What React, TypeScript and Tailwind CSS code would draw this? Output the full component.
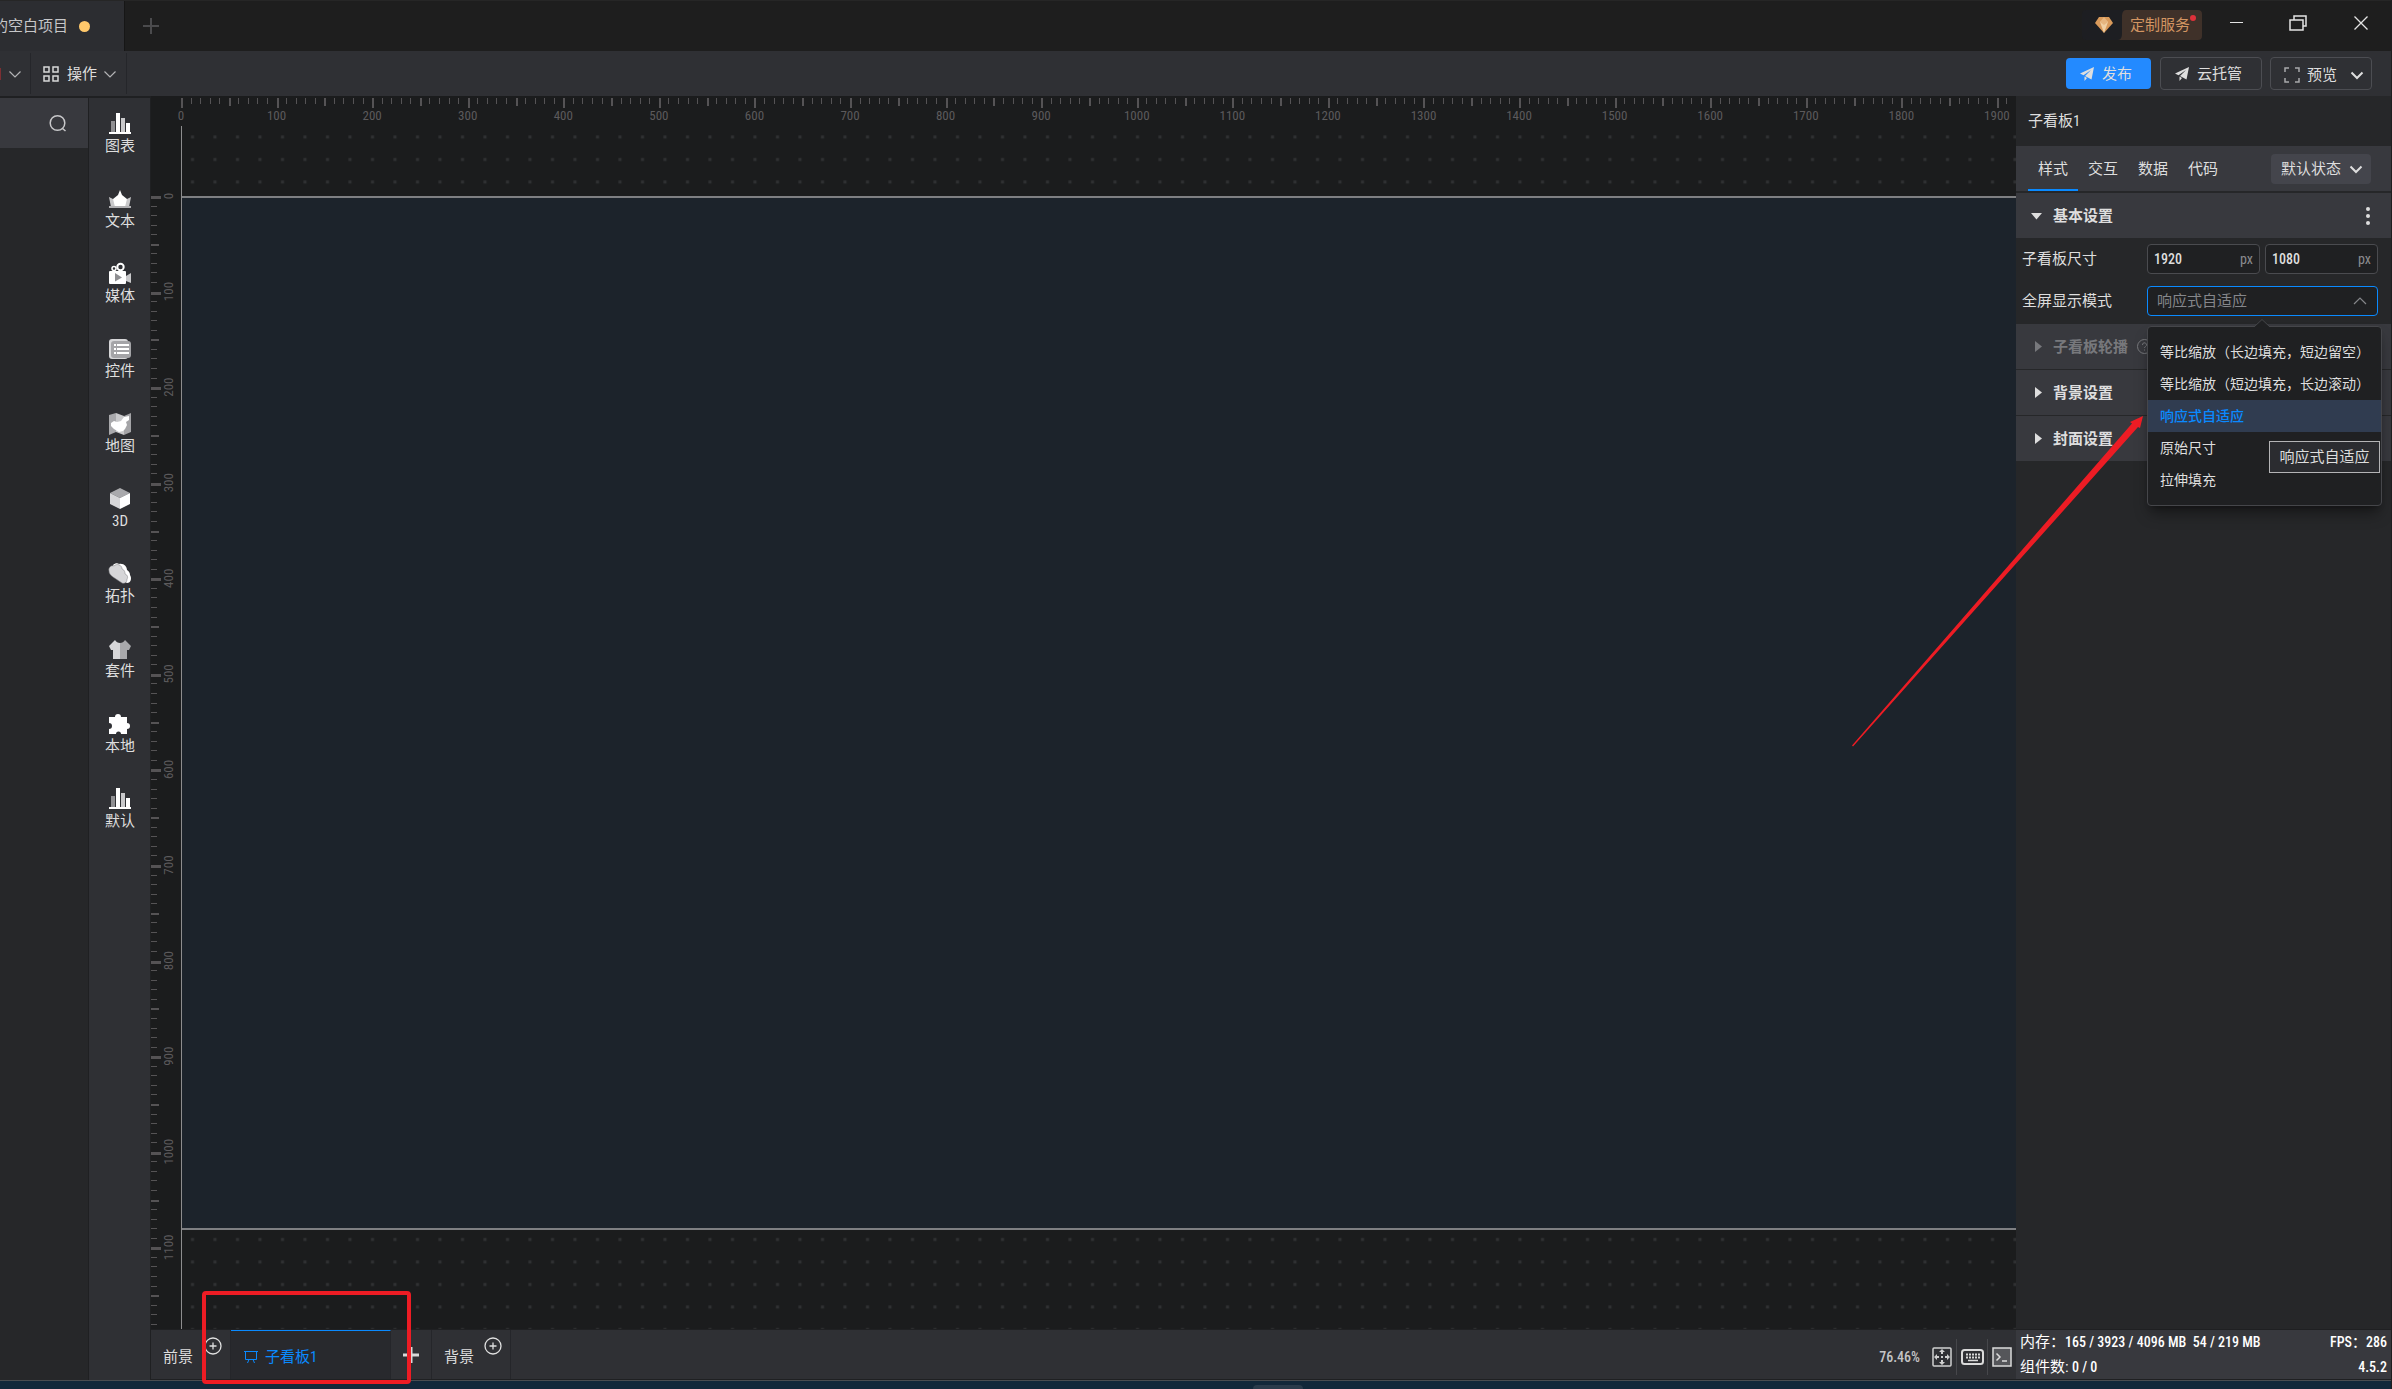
import type { ReactNode } from "react";

// canvas zoom, screen pixels per board unit
const SCALE = 0.95575;

const modes = [
  "等比缩放（长边填充，短边留空）",
  "等比缩放（短边填充，长边滚动）",
  "响应式自适应",
  "原始尺寸",
  "拉伸填充",
];

function BarsIcon() {
  return (
    <svg className="w-6 h-6" viewBox="0 0 24 24" shapeRendering="crispEdges">
      <path d="M3 9h4v11H3z" fill="#8f8f92" />
      <path d="M8 1h4v19H8z" fill="#fff" />
      <path d="M13 6h4v14h-4z" fill="#c9c9cb" />
      <path d="M18 11h4v9h-4z" fill="#fff" />
      <path d="M1 20h22v2H1z" fill="#fff" />
    </svg>
  );
}

function CrownIcon() {
  return (
    <svg className="w-6 h-6" viewBox="0 0 24 24">
      <path d="M1 10l6 3v7H3zM23 10l-6 3v7h4z" fill="#c9c9cb" />
      <path d="M12 3l2 5 5 4-2 8H7L5 12l5-4z" fill="#fff" />
      <path d="M1 19h22v2H1z" fill="#b0b0b3" />
    </svg>
  );
}

function CameraIcon() {
  return (
    <svg className="w-6 h-6" viewBox="0 0 24 24">
      <circle cx="12.5" cy="5" r="3.2" fill="none" stroke="#fff" strokeWidth="2" />
      <circle cx="6" cy="6.5" r="2" fill="none" stroke="#fff" strokeWidth="1.5" />
      <path d="M2 9h15a1 1 0 011 1v11a1 1 0 01-1 1H2a1 1 0 01-1-1V10a1 1 0 011-1z" fill="#fff" />
      <path d="M18 14l5-3v10l-5-2z" fill="#c9c9cb" />
      <path d="M7 11l7 4.5-7 4z" fill="#8f8f92" />
    </svg>
  );
}

function WidgetIcon() {
  return (
    <svg className="w-6 h-6" viewBox="0 0 24 24">
      <rect x="1" y="2" width="19" height="20" rx="3" fill="#d6d6d8" />
      <rect x="3" y="4" width="20" height="17" rx="3" fill="#a4a4a7" />
      <path d="M6 7h2v2H6zM6 11h2v2H6zM6 15h2v2H6zM9 7h12v2H9zM9 11h12v2H9zM9 15h12v2H9z" fill="#fff" />
    </svg>
  );
}

function MapIcon() {
  return (
    <svg className="w-6 h-6" viewBox="0 0 24 24">
      <path d="M1 3l7-2v19l-7 3z" fill="#a9a9ac" />
      <path d="M8 1l8 3v19l-8-3z" fill="#c9c9cb" />
      <path d="M16 4l7-3v19l-7 3z" fill="#a4a4a7" />
      <path d="M3 11l3-2 3 1 4-1 3-4 5-1v4l-3 2 1 3-2 4-2 2-4 1-5-3-3-3z" fill="#fff" />
    </svg>
  );
}

function CubeIcon() {
  return (
    <svg className="w-6 h-6" viewBox="0 0 24 24">
      <path d="M12 1l10 5-10 5L2 6z" fill="#a9a9ac" />
      <path d="M2 6l10 5v11L2 17z" fill="#d6d6d8" />
      <path d="M22 6l-10 5v11l10-5z" fill="#fff" />
    </svg>
  );
}

function CloudIcon() {
  return (
    <svg className="w-6 h-6" viewBox="0 0 24 24">
      <path d="M5 3c2-2 5-2 6-1 5-1 8 3 8 6 3 2 3 4 3 5 2 3 1 8-3 8L8 15z" fill="#fff" />
      <path
        d="M1 9c-1-4 3-6 5-5 3-3 8-1 8 3 3 1 3 4 3 5 3 1 3 4 2 5 0 4-3 5-5 4L5 15c-3-2-4-4-4-6z"
        fill="#d6d6d8"
        stroke="#77777a"
        strokeWidth="0.5"
      />
    </svg>
  );
}

function ShirtIcon() {
  return (
    <svg className="w-6 h-6" viewBox="0 0 24 24">
      <path d="M7 3c1 2 3 3 5 3v16H5v-9H3l-2-4z" fill="#d6d6d8" />
      <path d="M17 3c-1 2-3 3-5 3v16h7v-9h2l2-4z" fill="#a9a9ac" />
    </svg>
  );
}

function PuzzleIcon() {
  return (
    <svg className="w-6 h-6" viewBox="0 0 24 24">
      <path
        d="M1 5h6a3 3 0 016 0h6v6a3 3 0 010 6v5h-6a2.5 2.5 0 00-5 0H1v-5a3 3 0 000-6z"
        fill="#fff"
      />
    </svg>
  );
}

const categories: { label: string; icon: ReactNode }[] = [
  { label: "图表", icon: <BarsIcon /> },
  { label: "文本", icon: <CrownIcon /> },
  { label: "媒体", icon: <CameraIcon /> },
  { label: "控件", icon: <WidgetIcon /> },
  { label: "地图", icon: <MapIcon /> },
  { label: "3D", icon: <CubeIcon /> },
  { label: "拓扑", icon: <CloudIcon /> },
  { label: "套件", icon: <ShirtIcon /> },
  { label: "本地", icon: <PuzzleIcon /> },
  { label: "默认", icon: <BarsIcon /> },
];

function Chevron({ up = false, bold = false }: { up?: boolean; bold?: boolean }) {
  return (
    <svg className="w-[14px] h-[14px] shrink-0" viewBox="0 0 14 14" fill="none" stroke="currentColor" strokeWidth={bold ? 2 : 1.2}>
      <path d={up ? "M1 10l6-6 6 6" : "M1.5 4.5l5.5 5.5 5.5-5.5"} />
    </svg>
  );
}

function PlaneIcon() {
  return (
    <svg className="w-[14px] h-[14px] shrink-0" viewBox="0 0 14 14" fill="currentColor">
      <path d="M14 0L0 6.5l3.5 1.8L11 3 5 9l6.5 3.5zM4.5 9.5v4.5l2.5-3z" />
    </svg>
  );
}

function CirclePlus() {
  return (
    <svg className="w-[18px] h-[18px]" viewBox="0 0 18 18" fill="none" stroke="#e0e0e0" strokeWidth="1.3">
      <circle cx="9" cy="9" r="8" />
      <path d="M9 5.5v7M5.5 9h7" />
    </svg>
  );
}

function Header() {
  return (
    <header className="flex h-[51px] items-start bg-[#1e1e1e] border-t border-[#262626]">
      <div className="flex w-[125px] h-full shrink-0 items-center justify-end gap-[11px] overflow-hidden border-r border-[#161616] bg-[#2c2d31] pr-[34px]">
        <span className="shrink-0 whitespace-nowrap text-[#c6c6c8]">的空白项目</span>
        <span className="w-[11px] h-[11px] shrink-0 rounded-full bg-[#ffc86b]" />
      </div>
      <button aria-label="新建" className="ml-[18px] mt-[17px]">
        <svg className="w-4 h-4" viewBox="0 0 16 16" stroke="#4b4b4d" strokeWidth="2">
          <path d="M8 0v16M0 8h16" />
        </svg>
      </button>
      <button className="relative ml-auto mt-[9px] flex h-[30px] w-[120px] items-center overflow-hidden rounded bg-[#1d1e22]">
        <svg className="ml-[13px] w-[18px] h-4 shrink-0" viewBox="0 0 18 16">
          <path d="M4 0h10l4 6-9 10L0 6z" fill="#d99a5b" />
          <path d="M5 5l4-3 4 3-4 11z" fill="#f0cfa3" />
          <path d="M5 5L9 0l4 5-4 3z" fill="#e6b57f" />
        </svg>
        <svg className="ml-[5px] h-[30px] w-2 shrink-0" viewBox="0 0 8 30">
          <path d="M8 0C5 0 4 3 4 7v16c0 4-1 7-4 7h8z" fill="#3f3129" />
        </svg>
        <span className="flex h-full flex-1 items-center bg-[#3f3129] pl-1 text-[#d29562]">定制服务</span>
        <span className="absolute right-[6px] top-[5px] w-[6px] h-[6px] rounded-full bg-[#e0313a]" />
      </button>
      <div className="ml-[26px] mr-[22px] mt-[14px] flex items-center text-[#e4e4e4]">
        <button aria-label="最小化" className="mr-[45px]">
          <svg className="w-4 h-4" viewBox="0 0 16 16" stroke="currentColor" shapeRendering="crispEdges">
            <path d="M2 7.5h13" />
          </svg>
        </button>
        <button aria-label="还原" className="mr-[46px]">
          <svg className="w-[18px] h-4" viewBox="0 0 18 16" fill="none" stroke="currentColor" strokeWidth="1.5">
            <path d="M1 5h13v10H1zM5 5V1h12v10h-3" />
          </svg>
        </button>
        <button aria-label="关闭">
          <svg className="w-4 h-4" viewBox="0 0 16 16" stroke="currentColor" strokeWidth="1.3">
            <path d="M1.5 1.5l13 13M14.5 1.5l-13 13" />
          </svg>
        </button>
      </div>
    </header>
  );
}

function Toolbar() {
  return (
    <div className="flex h-[45px] items-center bg-[#2f3034] text-[#dedede]">
      <div className="flex h-[41px] w-[31px] items-center border-r border-[#25262a]">
        <span className="h-3 w-px bg-[#7c2f33]" />
        <button aria-label="更多" className="ml-[7px] flex text-[#b4b4b6]">
          <Chevron />
        </button>
      </div>
      <button className="flex h-[41px] w-24 items-center border-r border-[#25262a] pl-3">
        <svg className="w-4 h-4" viewBox="0 0 16 16" fill="none" stroke="#d8d8d8" strokeWidth="1.5">
          <path d="M1 1h5v5H1zM10 1h5v5h-5zM1 10h5v5H1zM10 10h5v5h-5z" />
        </svg>
        <span className="ml-2 mr-[6px]">操作</span>
        <span className="text-[#b4b4b6]">
          <Chevron />
        </span>
      </button>
      <div className="ml-auto mr-[19px] flex items-center">
        <button className="flex h-[31px] w-[85px] items-center gap-2 rounded bg-[#238aff] pl-[14px]">
          <PlaneIcon />
          发布
        </button>
        <button className="ml-[9px] flex h-[33px] w-[102px] items-center gap-2 rounded border border-[#4c4d52] pl-[14px]">
          <PlaneIcon />
          云托管
        </button>
        <button className="ml-2 flex h-[33px] w-[102px] items-center rounded border border-[#4c4d52] pl-[13px] pt-[3px]">
          <svg className="w-4 h-4" viewBox="0 0 16 16" fill="none" stroke="#a8a8aa" strokeWidth="1.5">
            <path d="M1 5V1h4M11 1h4v4M15 11v4h-4M5 15H1v-4" />
          </svg>
          <span className="ml-[7px] mr-[13px]">预览</span>
          <Chevron bold />
        </button>
      </div>
    </div>
  );
}

function tickLength(i: number) {
  if (i % 10 === 0) return 10;
  return i % 5 === 0 ? 8 : 6;
}

function tickWidth(i: number) {
  if (i % 10 === 0) return 3;
  return i % 5 === 0 ? 2 : 1;
}

function TopRuler() {
  const ticks = Array.from({ length: 192 }, (_, i) => i);
  return (
    <svg className="block h-[30px] w-full" fill="#555355">
      {ticks.map((i) => (
        <rect
          key={i}
          x={Math.round(30 + i * 10 * SCALE)}
          y="2"
          width={i % 5 ? 1 : 2}
          height={tickLength(i)}
        />
      ))}
      {ticks
        .filter((i) => i % 10 === 0)
        .map((i) => (
          <text key={i} x={30 + i * 10 * SCALE} y="24" textAnchor="middle" fontSize="13" fill="#5c5a5c">
            {i * 10}
          </text>
        ))}
    </svg>
  );
}

function SideRuler() {
  const ticks = Array.from({ length: 119 }, (_, i) => i);
  return (
    <svg className="absolute inset-0 h-full w-full" fill="#555355">
      {ticks.map((i) => (
        <rect
          key={i}
          x="0"
          y={Math.round(70 + i * 10 * SCALE)}
          width={tickLength(i)}
          height={tickWidth(i)}
        />
      ))}
      {ticks
        .filter((i) => i % 10 === 0)
        .map((i) => (
          <text
            key={i}
            transform={`translate(22 ${70 + i * 10 * SCALE}) rotate(-90)`}
            textAnchor="middle"
            fontSize="13"
            fill="#5c5a5c"
          >
            {i * 10}
          </text>
        ))}
    </svg>
  );
}

function Canvas() {
  return (
    <main className="flex min-w-0 flex-1 flex-col overflow-hidden bg-[#1b1c1d]">
      <TopRuler />
      <div className="flex flex-1">
        <div className="relative w-[30px] shrink-0">
          <SideRuler />
        </div>
        <div className="relative min-w-0 flex-1 border-l border-[#8d8d8e]">
          <svg className="absolute inset-0 h-full w-full">
            <defs>
              <pattern id="dots" x="-1" y="-0.5" width="22.5" height="22.5" patternUnits="userSpaceOnUse">
                <rect x="10" y="10" width="3" height="3" fill="#303133" />
              </pattern>
            </defs>
            <rect width="100%" height="100%" fill="url(#dots)" />
          </svg>
          <div className="relative mt-[70px] h-[1034px] border-y-2 border-[#7e7f82] bg-[#1c232b]" />
        </div>
      </div>
    </main>
  );
}

function Section({ title, open = false, disabled = false }: { title: string; open?: boolean; disabled?: boolean }) {
  return (
    <button
      disabled={disabled}
      className={`flex h-[45px] w-full items-center bg-[#38393e] pl-[15px] font-bold ${disabled ? "text-[#77787c]" : "text-[#dedede]"}`}
    >
      <svg className="w-[12px] h-[12px]" viewBox="0 0 12 12" fill="currentColor">
        <path d={open ? "M0 3h11L5.5 9.5z" : "M4 0v11l7-5.5z"} />
      </svg>
      <span className="ml-[10px]">{title}</span>
      {disabled && (
        <svg className="ml-[9px] w-[15px] h-[15px]" viewBox="0 0 15 15" fill="none" stroke="currentColor">
          <circle cx="7.5" cy="7.5" r="7" />
          <path d="M5.5 6a2 2 0 113 1.5c-.7.5-1 .8-1 1.5M7.5 10.5v1" />
        </svg>
      )}
      {open && (
        <svg className="ml-auto mr-[21px] w-1 h-[18px]" viewBox="0 0 4 18" fill="currentColor">
          <circle cx="2" cy="2" r="2" />
          <circle cx="2" cy="9" r="2" />
          <circle cx="2" cy="16" r="2" />
        </svg>
      )}
    </button>
  );
}

function SizeInput({ value, label }: { value: string; label: string }) {
  return (
    <label className="flex h-[30px] w-[113px] items-center rounded-sm border border-[#4a4b4f] bg-[#1f2022] px-[6px] text-sm">
      <input aria-label={label} defaultValue={value} className="w-0 min-w-0 flex-1 bg-transparent font-medium text-[#dedede] outline-none" />
      <span className="text-[#8b8c90]">px</span>
    </label>
  );
}

function ModeMenu() {
  return (
    <div className="absolute left-0 top-10 z-10 w-[235px] rounded border border-[#45464a] bg-[#1f2022] py-[9px] shadow-lg shadow-black/40">
      <svg className="absolute -top-2 left-[106px] w-4 h-2" viewBox="0 0 16 8">
        <path d="M0 8l8-7.5L16 8" fill="#1f2022" stroke="#45464a" />
      </svg>
      <ul role="listbox" aria-label="全屏显示模式">
        {modes.map((mode) => (
          <li
            key={mode}
            role="option"
            aria-selected={mode === "响应式自适应"}
            className={
              mode === "响应式自适应"
                ? "flex h-8 items-center whitespace-nowrap bg-[#303c50] pl-3 text-sm font-medium text-[#0a8aff]"
                : "flex h-8 items-center whitespace-nowrap pl-3 text-sm text-[#dedede]"
            }
          >
            {mode}
          </li>
        ))}
      </ul>
      <div role="tooltip" className="absolute right-px top-[114px] flex h-8 w-[111px] items-center justify-center whitespace-nowrap border border-[#b4b4b6] bg-[#2b2c30] text-[#dedede]">
        响应式自适应
      </div>
    </div>
  );
}

function SettingsPanel() {
  return (
    <aside className="relative w-[375px] shrink-0 bg-[#262729] text-[#dedede]">
      <h2 className="flex h-[50px] items-center pl-3">子看板1</h2>
      <div className="flex h-[45px] items-center bg-[#38393e] pl-3">
        <button className="h-full w-[50px] border-b-2 border-[#0a8aff] pt-[2px]">样式</button>
        <button className="h-full w-[50px]">交互</button>
        <button className="h-full w-[50px]">数据</button>
        <button className="h-full w-[50px]">代码</button>
        <div className="relative ml-auto mr-5">
          <select aria-label="状态" className="block h-[30px] w-[100px] appearance-none rounded-sm bg-[#44454c] pl-[10px]">
            <option>默认状态</option>
          </select>
          <span className="pointer-events-none absolute right-2 top-2">
            <Chevron bold />
          </span>
        </div>
      </div>
      <div className="mt-[2px]">
        <Section title="基本设置" open />
      </div>
      <div className="flex flex-col gap-3 pt-[6px] pb-2 pl-[6px]">
        <div className="flex h-[30px] items-center">
          <span className="w-[125px]">子看板尺寸</span>
          <div className="flex gap-[5px]">
            <SizeInput value="1920" label="宽度" />
            <SizeInput value="1080" label="高度" />
          </div>
        </div>
        <div className="flex h-[30px] items-center">
          <label htmlFor="mode" className="w-[125px]">
            全屏显示模式
          </label>
          <div className="relative">
            <select
              id="mode"
              defaultValue="响应式自适应"
              className="block h-[30px] w-[231px] appearance-none rounded-sm border border-[#0a8aff] bg-[#1f2022] pl-[9px] text-[#85868a]"
            >
              {modes.map((mode) => (
                <option key={mode}>{mode}</option>
              ))}
            </select>
            <span className="pointer-events-none absolute right-[11px] top-2 text-[#85868a]">
              <Chevron up />
            </span>
            <ModeMenu />
          </div>
        </div>
      </div>
      <div className="flex flex-col gap-px">
        <Section title="子看板轮播" disabled />
        <Section title="背景设置" />
        <Section title="封面设置" />
      </div>
      <svg className="pointer-events-none absolute -left-[164px] top-[319px] z-20 w-[292px] h-[332px]" viewBox="0 0 292 332">
        <path d="M1 331.5L0 330.5 280 8.5 278 7l13-6-3 12-2-1z" fill="#ed1c24" />
      </svg>
    </aside>
  );
}

function Footer() {
  return (
    <footer className="flex h-[51px] border-y border-[#1f2022] bg-[#2f3034] text-[#dedede]">
      <button className="relative w-20 border-r border-[#25262a] pl-3 pt-1 text-left">
        前景
        <span className="absolute left-[53px] top-[7px]">
          <CirclePlus />
        </span>
      </button>
      <div className="relative flex">
        <button className="flex w-40 items-center gap-[7px] border-r border-t border-r-[#25262a] border-t-[#0a8aff] bg-[#28292d] pl-[13px] pt-1 text-[#0a8aff]">
          <svg className="w-[14px] h-[14px]" viewBox="0 0 14 14" fill="none" stroke="currentColor">
            <path d="M0 1.5h14M1.5 1.5v8h11v-8M5 9.5L3.5 13M9 9.5l1.5 3.5" />
          </svg>
          子看板1
        </button>
        <span className="pointer-events-none absolute -left-[29px] -top-[39px] z-10 h-[93px] w-[209px] rounded-sm border-4 border-[#ed1c24]" />
      </div>
      <button aria-label="添加子看板" className="flex w-[41px] items-center justify-center border-r border-[#25262a]">
        <svg className="w-4 h-4" viewBox="0 0 16 16" stroke="#d8d8d8" strokeWidth="3">
          <path d="M8 0v16M0 8h16" />
        </svg>
      </button>
      <button className="relative w-[79px] border-r border-[#25262a] pl-3 pt-1 text-left">
        背景
        <span className="absolute left-[52px] top-[7px]">
          <CirclePlus />
        </span>
      </button>
      <div className="ml-auto flex items-center pt-1">
        <span className="mr-3 text-sm font-medium text-[#c4c4c6]">76.46%</span>
        <button aria-label="适应画布">
          <svg className="w-5 h-5" viewBox="0 0 20 20" fill="none" stroke="#cfcfcf">
            <rect x="1" y="1" width="18" height="18" rx="1" strokeWidth="1.5" />
            <path d="M10 5v2M10 13v2M5 10h2M13 10h2M9 10h2" strokeWidth="2" />
            <path d="M10 2l3 3H7zM10 18l3-3H7zM2 10l3-3v6zM18 10l-3-3v6z" fill="#cfcfcf" stroke="none" />
          </svg>
        </button>
        <span className="ml-1 h-9 w-px bg-[#46474b]" />
        <button aria-label="快捷键" className="ml-1">
          <svg className="w-[23px] h-4" viewBox="0 0 23 16" fill="none" stroke="#dadada">
            <rect x="1" y="1" width="21" height="14" rx="2.5" strokeWidth="2" />
            <path d="M5 5.5h14M5 8.5h14" strokeWidth="2" strokeDasharray="2 1" />
            <path d="M7 11.5h10" strokeWidth="1.5" />
          </svg>
        </button>
        <span className="ml-[3px] h-9 w-px bg-[#46474b]" />
        <button aria-label="控制台" className="ml-1 mr-1">
          <svg className="w-5 h-5" viewBox="0 0 20 20" fill="none" stroke="#dadada" strokeWidth="1.5">
            <rect x="1" y="1" width="18" height="18" fill="#55565a" />
            <path d="M4.5 6.5l3.5 3.5L4.5 13.5M10 14h5" />
          </svg>
        </button>
      </div>
      <div className="flex w-[375px] flex-col gap-[3px] bg-[#38393e] px-1 text-white">
        <p className="flex h-6 items-center justify-between">
          <span className="whitespace-pre">
            内存：<b className="text-sm font-medium">165 / 3923 / 4096 MB  54 / 219 MB</b>
          </span>
          <b className="text-sm font-medium">FPS：286</b>
        </p>
        <p className="flex h-5 items-center justify-between">
          <span>
            组件数: <b className="text-sm font-medium">0 / 0</b>
          </span>
          <b className="text-sm font-medium">4.5.2</b>
        </p>
      </div>
    </footer>
  );
}

export default function App() {
  return (
    <div className="flex min-h-screen flex-col overflow-hidden border-r border-[#1e1e1f] bg-[#1f2022] text-[15px] leading-5 font-['Roboto_Condensed','Roboto','Noto_Sans_CJK_SC',sans-serif]">
      <Header />
      <Toolbar />
      <div className="flex flex-1">
        <aside className="mt-[2px] w-[88px] shrink-0 bg-[#262729]">
          <div className="flex h-[50px] items-center justify-end bg-[#38393e] pr-[21px]">
            <button aria-label="搜索">
              <svg className="w-[18px] h-[18px]" viewBox="0 0 18 18" fill="none" stroke="#c8c8ca" strokeWidth="1.5">
                <circle cx="8.5" cy="9" r="7.3" />
                <path d="M13.5 14.5l3 2.5" />
              </svg>
            </button>
          </div>
        </aside>
        <nav className="ml-px mt-[2px] flex w-[61px] shrink-0 flex-col gap-[31px] bg-[#2f3034] pt-[14px] pl-px text-[#dedede]">
          {categories.map(({ label, icon }) => (
            <button key={label} className="flex h-11 flex-col items-center">
              {icon}
              <span>{label}</span>
            </button>
          ))}
        </nav>
        <div className="ml-px flex min-w-0 flex-1 flex-col">
          <div className="flex flex-1">
            <Canvas />
            <SettingsPanel />
          </div>
          <Footer />
        </div>
      </div>
      <div className="flex h-[9px] items-end justify-center border-t border-[#4a4d50] bg-[#12283a] pl-[164px]">
        <span className="h-1 w-[50px] rounded-t bg-[#2a3b4b]" />
      </div>
    </div>
  );
}
